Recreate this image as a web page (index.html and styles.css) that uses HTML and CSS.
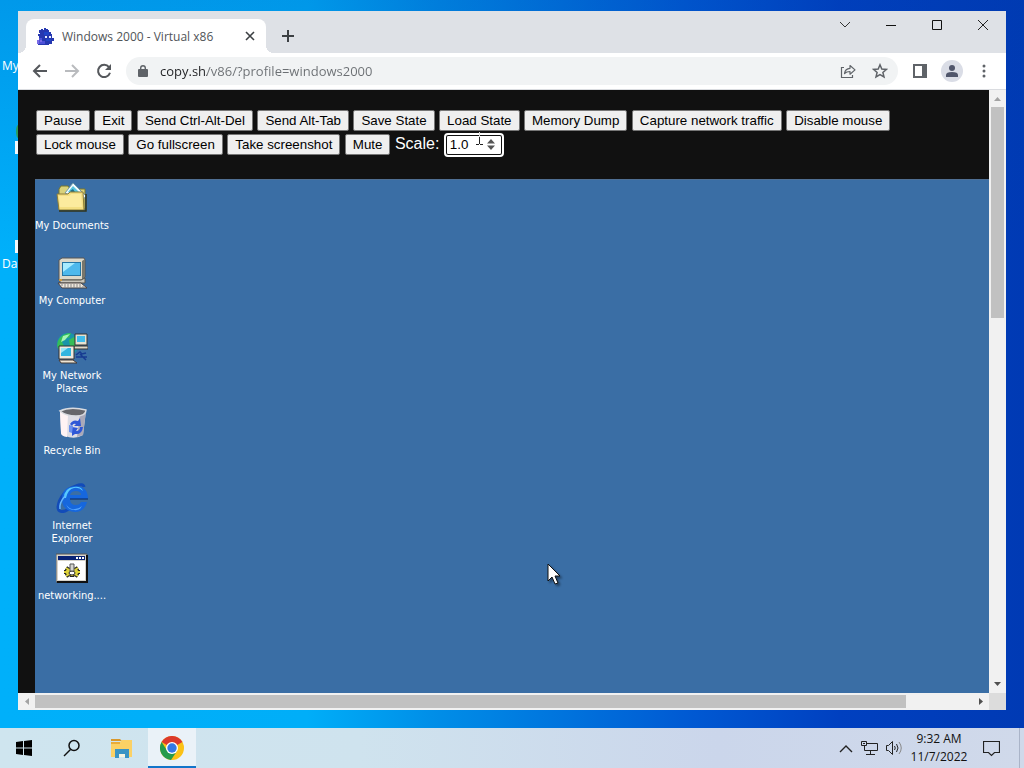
FILE: index.html
```html
<!DOCTYPE html>
<html lang="en">
<head>
<meta charset="utf-8">
<title>Windows 2000 - Virtual x86</title>
<link rel="stylesheet" href="styles.css">
</head>
<body>
<main class="desktop">
  <span class="host-label host-label-top">My</span>
  <span class="host-chip host-chip-green"></span>
  <span class="host-chip host-chip-one"></span>
  <span class="host-chip host-chip-two"></span>
  <span class="host-label host-label-bottom">Da</span>

  <section class="window">
    <header class="tabstrip">
      <div class="tab">
        <svg class="favicon" viewBox="0 0 17 17" shape-rendering="crispEdges">
          <path fill="#2638b0" d="M2 2h2V1h2v1h1V0h2v1h2v1h1v2h2v2h1v4h2v3h-2v3h-3v1H1v-4h1V8H1V6h2V5H2z"/>
          <path fill="#4c50d8" d="M2 10h3v3h3v3H1v-4h1z"/>
          <path fill="#7a6ae6" d="M0 12h2v4H0zM3 12h2v2H3z"/>
          <path fill="#1e46c8" d="M7 4h5v3H7zM9 11h5v2H9z"/>
          <path fill="#e6edff" d="M8 8h2v2H8zM12 8h2v2h-2z"/>
        </svg>
        <span class="tab-title">Windows 2000 - Virtual x86</span>
        <button class="icon-button tab-close" aria-label="Close tab"><svg width="10" height="10" viewBox="0 0 10 10"><path d="M1 1l8 8M9 1l-8 8" stroke="#3c4043" stroke-width="1.6"/></svg></button>
      </div>
      <button class="icon-button new-tab" aria-label="New tab"><svg width="14" height="14" viewBox="0 0 14 14"><path d="M7 1v12M1 7h12" stroke="#3c4043" stroke-width="2"/></svg></button>
      <div class="caption">
        <button class="icon-button" aria-label="Search tabs"><svg width="12" height="12" viewBox="0 0 12 12"><path d="M1 3l5 5 5-5" fill="none" stroke="#333"/></svg></button>
        <button class="icon-button" aria-label="Minimize"><svg width="12" height="12" viewBox="0 0 12 12"><path d="M1 6.5h10" stroke="#111"/></svg></button>
        <button class="icon-button" aria-label="Maximize"><svg width="12" height="12" viewBox="0 0 12 12"><path d="M1.5 1.5h9v9h-9z" fill="none" stroke="#111"/></svg></button>
        <button class="icon-button" aria-label="Close"><svg width="12" height="12" viewBox="0 0 12 12"><path d="M1 1l10 10M11 1L1 11" stroke="#222"/></svg></button>
      </div>
    </header>

    <nav class="toolbar">
      <button class="icon-button" aria-label="Back"><svg width="16" height="16" viewBox="0 0 16 16"><path d="M15 8H2M8 2L2 8l6 6" fill="none" stroke="#55585c" stroke-width="2"/></svg></button>
      <button class="icon-button" aria-label="Forward"><svg width="16" height="16" viewBox="0 0 16 16"><path d="M1 8h13M8 2l6 6-6 6" fill="none" stroke="#b9bbbe" stroke-width="2"/></svg></button>
      <button class="icon-button" aria-label="Reload"><svg width="16" height="16" viewBox="0 0 16 16"><path d="M13 4.2A6.1 6.1 0 1 0 14 9.8" fill="none" stroke="#55585c" stroke-width="2"/><path d="M15 1v6H9z" fill="#55585c"/></svg></button>
      <div class="omnibox">
        <svg width="10" height="13" viewBox="0 0 10 13"><path fill="#5f6368" d="M1 4h8q1 0 1 1v6q0 1-1 1H1q-1 0-1-1V5q0-1 1-1z"/><path d="M2.700 4.500V3a2.300 2.300 0 0 1 4.600 0v1.500" fill="none" stroke="#5f6368" stroke-width="1.400"/></svg>
        <input class="address" type="text" aria-label="Address" value="copy.sh/v86/?profile=windows2000">
        <button class="icon-button" aria-label="Share"><svg width="16" height="16" viewBox="0 0 16 16"><path d="M4 4.500H1.500v10h11V12" fill="none" stroke="#5f6368" stroke-width="1.200"/><path d="M4.500 10.500C5 7 7 5.500 10 5.300V2.500l5 4.400-5 4.300V8.500c-2.500 0-4 .5-5.500 2z" fill="none" stroke="#5f6368" stroke-width="1.200" stroke-linejoin="round"/></svg></button>
        <button class="icon-button" aria-label="Bookmark"><svg width="16" height="16" viewBox="0 0 16 16"><path d="M8 1.800l1.800 4.200 4.600.4-3.500 3 1.100 4.500-4-2.400-4 2.400 1.100-4.500-3.500-3 4.600-.4z" fill="none" stroke="#5f6368" stroke-width="1.500"/></svg></button>
      </div>
      <button class="icon-button" aria-label="Side panel"><svg width="14" height="14" viewBox="0 0 14 14"><path fill="#5f6368" fill-rule="evenodd" d="M0 0h14v14H0zM2 2v10h7V2z"/></svg></button>
      <button class="icon-button profile" aria-label="Profile"><svg width="12" height="12" viewBox="0 0 12 12"><circle cx="6" cy="3" r="3" fill="#50566b"/><path fill="#50566b" d="M0 12V10q0-3 6-3t6 3v2z"/></svg></button>
      <button class="icon-button" aria-label="Menu"><svg width="4" height="14" viewBox="0 0 4 14" fill="#5f6368"><circle cx="2" cy="2" r="1.500"/><circle cx="2" cy="7" r="1.500"/><circle cx="2" cy="12" r="1.500"/></svg></button>
    </nav>

    <div class="viewport">
      <article class="page">
        <div class="controls">
          <button>Pause</button>
          <button>Exit</button>
          <button>Send Ctrl-Alt-Del</button>
          <button>Send Alt-Tab</button>
          <button>Save State</button>
          <button>Load State</button>
          <button>Memory Dump</button>
          <button>Capture network traffic</button>
          <button>Disable mouse</button>
          <button>Lock mouse</button>
          <button>Go fullscreen</button>
          <button>Take screenshot</button>
          <button>Mute</button>
          <label for="scale">Scale:</label>
          <span class="scale-field">
            <input id="scale" type="number" min="0.2" max="10" step="0.1" value="1.0">
            <svg class="spinner" width="8" height="11" viewBox="0 0 8 11"><path d="M0 4.500L4 0l4 4.500zM0 6.500L4 11l4-4.500z" fill="#555"/></svg>
            <svg class="ibeam" width="7" height="16" viewBox="0 0 7 16" shape-rendering="crispEdges"><path d="M3 0h1v5H3z" fill="#ddd"/><path d="M3 5h1v7H3zM0 12h3v1H0zM4 12h3v1H4z" fill="#222"/></svg>
          </span>
        </div>

        <div class="guest">
          <ul class="shortcuts">
            <li>
              <svg width="32" height="32" viewBox="0 0 32 32"><path d="M3 7l2-3h7l2 3h15v20H3z" fill="#d9d27c" stroke="#77752f"/><path d="M9 11l8-10 13 13-4 5z" fill="#f2fbff" stroke="#719aa8"/><path d="M12 10l5-6 7 7-5 4z" fill="#57c5df"/><path d="M14 9l3-2 2 3 3 1-3 2z" fill="#216f89"/><path d="M1 12h11l2-2h13l1 18H3z" fill="#f4df82" stroke="#8c7d39"/><path d="M3 14h10l2-2h10l1 13H4z" fill="#fff0a9" opacity=".7"/><path d="M3 29h27V12" fill="none" stroke="#30351e" stroke-width="1.500"/></svg>
              <span>My Documents</span>
            </li>
            <li>
              <svg width="32" height="32" viewBox="0 0 32 32"><path d="M3 3l3-2h22l1 2v17l-3 3H3z" fill="#dcd9ca" stroke="#555"/><path d="M26 4l3-2v18l-3 3z" fill="#77766c"/><path d="M6 5h19v14H6z" fill="#2576a5"/><path d="M7 6h17v12H7z" fill="#4db9ec"/><path d="M7 6h12L7 15z" fill="#a7ecff"/><path d="M4 23h21l4-2v5H4z" fill="#c9c6bc" stroke="#57544b"/><path d="M2 26h23l6 5H6z" fill="#eee7dc" stroke="#4b4444"/><path d="M5 28h20M8 30h20" stroke="#888" stroke-dasharray="2 1"/><path d="M3 22h3v2H3z" fill="#cc993f"/></svg>
              <span>My Computer</span>
            </li>
            <li>
              <svg width="32" height="32" viewBox="0 0 32 32"><circle cx="12" cy="12" r="11" fill="#1995a9"/><path d="M2 9q4-8 13-8l-2 5-4-1-3 5 2 4-5 4q-3-4-1-9zM13 8l5-3 4 5-3 8-5-4z" fill="#35bd58"/><path d="M7 4l7-2-5 6-4 2z" fill="#a5f5b3"/><path d="M19 2h12v11H19z" fill="#e5e1d2" stroke="#333"/><path d="M21 4h8v6h-8z" fill="#42bceb"/><path d="M18 14h14v3H18z" fill="#ddd6c7" stroke="#333"/><path d="M3 14h15v13H3z" fill="#eee9dd" stroke="#333"/><path d="M5 16h10v8H5z" fill="#32b5df"/><path d="M5 16h7l-7 5z" fill="#9be6f5"/><path d="M3 28h14l4 3H5z" fill="#eee5d4" stroke="#443a35"/><path d="M20 23l4-3 2 2 4-1M20 25h11M24 22l6 6" fill="none" stroke="#173b91" stroke-width="1.500"/></svg>
              <span>My Network Places</span>
            </li>
            <li>
              <svg width="32" height="32" viewBox="0 0 32 32"><path d="M4 3l26 1-3 24q-8 5-18 1-4-1-4-4z" fill="#dedde5"/><path d="M4 5l8 2-1 23q-6-1-6-4z" fill="#fff3f4"/><path d="M24 7l6-3-3 24-6 2z" fill="#aaa9b9"/><path d="M4 4q10-5 26-1 0 6-10 6T4 4z" fill="#66666b" stroke="#d9dbe0" stroke-width="1.500"/><path d="M14 17q3-5 8-3l2-3 1 8h-7l2-2q-3-1-4 2zM27 20q-1 8-8 7l-3 2v-9l6 1-2 3q4 0 4-4z" fill="#2f58d6"/><path d="M13 18l4 1-1 7-3-1z" fill="#6a90ef"/></svg>
              <span>Recycle Bin</span>
            </li>
            <li>
              <svg width="32" height="32" viewBox="0 0 32 32"><path d="M28 5q-1-4-8-1C10 7 3 16 2 25q0 6 7 4l4-2" fill="none" stroke="#124bb8" stroke-width="3"/><path fill="#1667dd" fill-rule="evenodd" d="M32 17H14q0 6 6 6 4 0 5-3h6q-3 10-12 10Q6 29 6 17T19 4q13 0 13 13zM14 13h11q0-4-5-4t-6 4z"/><path d="M8 16q0-10 10-11 7-1 9 4-4-4-9-3-6 1-8 10z" fill="#57c8ff"/><path d="M10 22q3 6 9 5 4 0 7-3-2 5-8 4-6 0-8-6z" fill="#52a4ff"/><path d="M4 27q-1-6 5-13" fill="none" stroke="#65b7ff" stroke-width="1.500"/><path d="M14 17h18" stroke="#09265e"/></svg>
              <span>Internet Explorer</span>
            </li>
            <li>
              <svg width="32" height="32" viewBox="0 0 32 32"><path d="M0 2h31v28H0z" fill="#d6d3ca" stroke="#555"/><path d="M1 30h30V3" fill="none" stroke="#111" stroke-width="2"/><path d="M2 4h27v4H2z" fill="#082275"/><path d="M20 5h2v2h-2zM23 5h2v2h-2zM26 5h2v2h-2z" fill="#fff"/><path d="M2 9h27v19H2z" fill="#fff"/><path d="M16 15v10M8 20h16M10 16l12 8M22 16l-12 8" stroke="#222" stroke-width="4"/><ellipse cx="16" cy="20" rx="7" ry="4" fill="#ded33b" stroke="#222"/><path d="M16 15v9M8 20h16M10 16l12 8M22 16l-12 8" stroke="#ded33b" stroke-width="2"/><ellipse cx="16" cy="21" rx="3" ry="2" fill="#fff" stroke="#222"/><path d="M14 12h4v7h-4z" fill="#d5d5cf" stroke="#555"/></svg>
              <span>networking....</span>
            </li>
          </ul>
          <svg class="pointer" width="14" height="22" viewBox="0 0 14 22"><path d="M1 1v17l4-4 3 7 3-1-3-7h5z" fill="#fff" stroke="#111"/></svg>
        </div>
      </article>

      <div class="scroll scroll-y">
        <svg width="9" height="5" viewBox="0 0 9 5"><path d="M1 5l3.500-4L8 5z" fill="#a3a3a3"/></svg>
        <div class="track"><div class="thumb"></div></div>
        <svg width="9" height="5" viewBox="0 0 9 5"><path d="M1 0l3.500 4L8 0z" fill="#505050"/></svg>
      </div>
      <div class="scroll scroll-x">
        <svg width="5" height="9" viewBox="0 0 5 9"><path d="M5 1L1 4.500 5 8z" fill="#a3a3a3"/></svg>
        <div class="track"><div class="thumb"></div></div>
        <svg width="5" height="9" viewBox="0 0 5 9"><path d="M1 1l4 3.500L1 8z" fill="#505050"/></svg>
      </div>
      <div class="corner"></div>
    </div>
  </section>
</main>

<footer class="taskbar">
  <button class="task" aria-label="Start"><svg width="16" height="16" viewBox="0 0 16 16"><path d="M0 2l7-1v6.500H0zM8 1l8-1v7.500H8zM0 8.500h7V15l-7-1zM8 8.500h8V16l-8-1z"/></svg></button>
  <button class="task" aria-label="Search"><svg width="18" height="18" viewBox="0 0 18 18"><circle cx="11" cy="6.500" r="5" fill="none" stroke="#111" stroke-width="1.500"/><path d="M7.500 10.500L1 17" stroke="#111" stroke-width="1.500"/></svg></button>
  <button class="task" aria-label="File Explorer"><svg width="22" height="19" viewBox="0 0 22 19"><path d="M0 0h9l2 2H0z" fill="#d9982b"/><path d="M0 3h9l2-2h10v17H0z" fill="#fbd165"/><path d="M0 3h9v2H0z" fill="#e9ac39"/><path d="M4 10h14v9h-4v-4H8v4H4z" fill="#3a94c4"/><path d="M8 15h6v3H8z" fill="#f6f3df"/></svg></button>
  <button class="task task-active" aria-label="Google Chrome"><svg width="24" height="24" viewBox="0 0 24 24"><circle cx="12" cy="12" r="12" fill="#fbc116"/><path d="M12 12L1.600 6A12 12 0 0 1 22.400 6z" fill="#dc3a2b"/><path d="M1.600 6A12 12 0 0 0 11 24l6-9-5-3-4.800 2.700z" fill="#259b4b"/><circle cx="12" cy="12" r="6" fill="#fff"/><circle cx="12" cy="12" r="4.700" fill="#3478e5"/></svg></button>
  <div class="tray">
    <button class="icon-button" aria-label="Show hidden icons"><svg width="14" height="9" viewBox="0 0 14 9"><path d="M1 8l6-6 6 6" fill="none" stroke="#222" stroke-width="1.400"/></svg></button>
    <button class="icon-button" aria-label="Network"><svg width="17" height="14" viewBox="0 0 17 14"><path d="M5.500 2.500h11v7H3.500V5M9.500 9.500v4M5 13.500h9M.5.500h5v4h-5zM2 2.500h2" fill="none" stroke="#222"/></svg></button>
    <button class="icon-button" aria-label="Volume"><svg width="16" height="14" viewBox="0 0 16 14"><path d="M.5 4.500h2l4-4v13l-4-4h-2zM8.500 5q1.500 2 0 4M10.500 3q3 4 0 8" fill="none" stroke="#222"/><path d="M13 1q4.500 6 0 12" fill="none" stroke="#888"/></svg></button>
    <button class="clock"><span>9:32 AM</span><span>11/7/2022</span></button>
    <button class="icon-button" aria-label="Notifications"><svg width="17" height="17" viewBox="0 0 17 17"><path d="M.5 1.500h16v11h-5l-3 3-3-3h-5z" fill="none" stroke="#222" stroke-width="1.200"/></svg></button>
  </div>
</footer>
</body>
</html>
```
FILE: styles.css
```css
* { box-sizing: border-box; }

body {
  margin: 0;
  min-height: 100vh;
  display: flex;
  flex-direction: column;
  font-family: "Open Sans", "Noto Sans", sans-serif;
  font-size: 12px;
}

button { margin: 0; }
svg { display: block; flex: none; }

.icon-button {
  display: grid;
  place-items: center;
  padding: 0;
  border: 0;
  background: none;
}

.desktop {
  position: relative;
  flex: 1;
  display: flex;
  padding: 11px 18px 18px;
  background:
    linear-gradient(180deg, rgba(0, 60, 170, 0.2), rgba(0, 60, 170, 0) 35%),
    linear-gradient(90deg, #00b0fa 0%, #00aef8 30%, #008fe8 42%, #0058d2 68%, #0040c0 82%, #003ab4 100%);
}

.host-label {
  position: absolute;
  left: 2px;
  line-height: 16px;
  color: #fff;
}
.host-label-top { top: 58px; }
.host-label-bottom { top: 256px; }
.host-chip {
  position: absolute;
  left: 15px;
  width: 4px;
  height: 13px;
  background: #f4f8fa;
}
.host-chip-green { top: 125px; left: 16px; border-radius: 50%; background: #2c9c5c; }
.host-chip-one { top: 141px; }
.host-chip-two { top: 240px; }

.window {
  position: relative;
  flex: 1;
  display: flex;
  flex-direction: column;
  min-width: 0;
  background: #fff;
}

.tabstrip {
  height: 42px;
  display: flex;
  padding-left: 8px;
  background: #dee1e6;
}
.tab {
  position: relative;
  width: 240px;
  margin-top: 8px;
  padding: 0 10px 0 11px;
  display: flex;
  align-items: center;
  gap: 8px;
  border-radius: 8px 8px 0 0;
  background: #fff;
}
.tab::before,
.tab::after {
  content: "";
  position: absolute;
  bottom: 0;
  width: 8px;
  height: 8px;
}
.tab::before { left: -8px; background: radial-gradient(circle at 0 0, transparent 8px, #fff 8px); }
.tab::after { right: -8px; background: radial-gradient(circle at 100% 0, transparent 8px, #fff 8px); }
.favicon { width: 17px; height: 17px; }
.tab-title { flex: 1; white-space: nowrap; color: #505458; }
.tab-close { width: 12px; height: 16px; }
.new-tab { width: 28px; height: 28px; margin: 11px 0 0 8px; }
.caption { display: flex; margin-left: auto; height: 28px; }
.caption .icon-button { width: 46px; }

.toolbar {
  height: 37px;
  display: flex;
  align-items: center;
  gap: 4px;
  padding: 0 8px;
  border-bottom: 1px solid #dadce0;
}
.toolbar .icon-button { width: 28px; height: 28px; }
.toolbar .profile { width: 22px; height: 22px; margin: 0 3px; border-radius: 50%; background: #dadde6; }
.omnibox {
  flex: 1;
  height: 28px;
  display: flex;
  align-items: center;
  gap: 4px;
  margin: 0 4px;
  padding: 0 4px 0 12px;
  border-radius: 14px;
  background: #f1f3f4;
}
.address {
  flex: 1;
  min-width: 0;
  margin-left: 8px;
  padding: 0;
  border: 0;
  outline: 0;
  font: 13px/20px "Open Sans", "Noto Sans", sans-serif;
  color: transparent;
  background: linear-gradient(90deg, #202124 47px, #6b6f73 47px);
  -webkit-background-clip: text;
  background-clip: text;
}

.viewport {
  flex: 1;
  display: grid;
  grid-template: minmax(0, 1fr) 17px / minmax(0, 1fr) 17px;
}
.page {
  display: flex;
  flex-direction: column;
  padding: 18px 0 0 17px;
  background: #111;
  font-family: "Liberation Sans", Arial, sans-serif;
}
.controls {
  min-height: 71px;
  padding: 0 16px 0 1px;
  font-size: 16px;
  line-height: 24px;
  color: #fff;
}
.controls button {
  height: 21px;
  padding: 0 7px;
  border: 1px solid #767676;
  border-radius: 2px;
  background: #efefef;
  color: #000;
  font-family: "Liberation Sans", Arial, sans-serif;
}
.scale-field {
  position: relative;
  display: inline-block;
  margin-left: 2px;
  line-height: 20px;
}
.scale input {
  display: block;
}
.scale-field input {
  width: 56px;
  height: 20px;
  margin: 0;
  padding: 0 4px 0 3px;
  border: 1px solid #111;
  border-radius: 2px;
  outline: 2px solid #fff;
  background: #fff;
  color: #000;
  font-family: "Liberation Sans", Arial, sans-serif;
  appearance: textfield;
}
.scale-field input::-webkit-inner-spin-button { display: none; }
.spinner { position: absolute; right: 7px; top: 5px; }
.ibeam { position: absolute; left: 30px; top: -2px; }

.guest {
  position: relative;
  flex: 1;
  border-top: 1px solid #4f6f93;
  background: #3a6ea5;
}
.shortcuts {
  width: 74px;
  margin: 0;
  padding: 0;
  display: grid;
  grid-template-rows: repeat(4, 75px) 70px auto;
  list-style: none;
  font: 11px/13px "DejaVu Sans Condensed", "DejaVu Sans", sans-serif;
  color: #fff;
}
.shortcuts li {
  display: flex;
  flex-direction: column;
  align-items: center;
  gap: 5px;
  padding-top: 2px;
  text-align: center;
}
.pointer { position: absolute; left: 512px; top: 383px; filter: drop-shadow(2px 2px 1px rgba(0, 0, 0, 0.4)); }

.scroll {
  display: flex;
  align-items: center;
  justify-content: space-between;
  gap: 6px;
  background: #f1f1f1;
}
.scroll-y { flex-direction: column; padding: 6px 0; }
.scroll-x { padding: 0 6px; }
.track { flex: 1; }
.thumb { background: #c1c1c1; }
.scroll-y .thumb { width: 13px; height: 37%; }
.scroll-x .thumb { width: 93%; height: 13px; }
.corner { background: #dcdcdc; }

.taskbar {
  height: 40px;
  display: flex;
  background: linear-gradient(90deg, #cfe5ef 0%, #cfe3ee 35%, #cbd6eb 70%, #d0d9ea 100%);
}
.task {
  width: 48px;
  margin-right: 2px;
  padding: 0;
  display: grid;
  place-items: center;
  border: 0;
  background: none;
}
.task:first-child { margin-right: 0; }
.task-active {
  background: #eaf2f8;
  box-shadow: inset 0 -2px #1275ca;
}
.tray {
  margin: 0 4px 0 auto;
  padding-right: 19px;
  display: flex;
  align-items: center;
  gap: 8px;
  border-right: 1px solid #aab4c8;
}
.clock {
  display: flex;
  flex-direction: column;
  align-items: center;
  width: 58px;
  margin-right: 7px;
  padding: 0;
  border: 0;
  background: none;
  font: 12px/18px "Open Sans", "Noto Sans", sans-serif;
  color: #111;
}
```
